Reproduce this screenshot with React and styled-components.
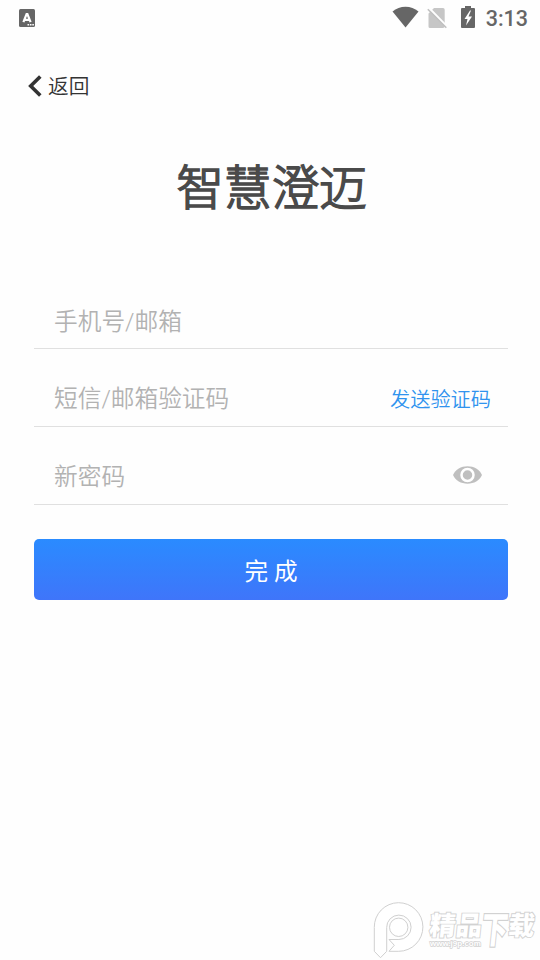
import React from 'react';
import styled, { createGlobalStyle } from 'styled-components';

const GlobalStyle = createGlobalStyle`
  * {
    box-sizing: border-box;
  }

  body {
    margin: 0;
    background: #fefefe;
    font-family: Roboto, 'Noto Sans CJK SC', sans-serif;
    font-weight: 350;
  }
`;

const Screen = styled.div`
  position: relative;
  display: flex;
  flex-direction: column;
  width: 540px;
  height: 960px;
  overflow: hidden;
  background: #fefefe;
`;

const StatusBar = styled.div`
  display: flex;
  align-items: center;
  justify-content: space-between;
  height: 36px;
  padding: 0 12px 0 19px;
`;

const StatusIcons = styled.div`
  display: flex;
  align-items: center;
`;

const Clock = styled.span`
  margin-left: 10px;
  padding-top: 2px;
  font-size: 21.5px;
  font-weight: 500;
  line-height: 36px;
  color: #666;
`;

const BackButton = styled.button`
  display: flex;
  align-items: center;
  align-self: flex-start;
  gap: 6px;
  height: 30px;
  margin: 35px 0 0 28px;
  padding: 0;
  border: none;
  background: none;
  font-family: inherit;
  font-size: 20.7px;
  font-weight: 350;
  line-height: 30px;
  color: #333;
`;

const BackLabel = styled.span`
  padding-top: 1px;
`;

const Title = styled.h1`
  margin: 48px 0 0 3px;
  height: 72px;
  font-family: 'Noto Sans CJK SC', sans-serif;
  font-size: 47.5px;
  font-weight: 300;
  line-height: 72px;
  text-align: center;
  color: #4a4a4a;
  -webkit-text-stroke: 1.7px #4a4a4a;
  stroke-linejoin: round;
`;

const Form = styled.form`
  display: flex;
  flex-direction: column;
  margin: 50px 32px 0 34px;
`;

const Field = styled.div`
  display: flex;
  align-items: center;
  height: 78px;
  padding: ${({ $top }) => $top}px 17px 0 20px;
  border-bottom: 1px solid #e0e0e0;
`;

const Input = styled.input`
  flex: 1;
  min-width: 0;
  height: 40px;
  padding: 0;
  border: none;
  outline: none;
  background: transparent;
  font-family: inherit;
  font-size: 23.7px;
  font-weight: 350;

  &::placeholder {
    color: #b2b2b2;
    opacity: 1;
  }
`;

const SendCode = styled.button`
  margin-bottom: 1px;
  padding: 0;
  border: none;
  background: none;
  font-family: inherit;
  font-size: 20.2px;
  font-weight: 350;
  color: #3093ee;
`;

const EyeIcon = styled.svg`
  margin: 0 9px 4px 0;
`;

const SubmitButton = styled.button`
  height: 61px;
  margin-top: 34px;
  padding: 0;
  border: none;
  border-radius: 5px;
  background: linear-gradient(#2a8bff, #3f75fa);
  font-family: inherit;
  font-size: 23.6px;
  font-weight: 400;
  color: #fff;
`;

const Watermark = styled.div`
  position: absolute;
  right: 0;
  bottom: 0;
  display: flex;
  width: 167px;
  height: 58px;
`;

const WatermarkText = styled.div`
  display: flex;
  flex-direction: column;
  padding-top: 8px;
  margin-left: 5px;
  color: #fff;
  paint-order: stroke fill;
  -webkit-text-stroke: 1.8px #d2d2d2;
  stroke-linejoin: round;
  white-space: nowrap;
`;

const WatermarkName = styled.span`
  display: flex;
  font-family: 'Noto Sans CJK SC', sans-serif;
  font-size: 26.2px;
  font-weight: 900;
  line-height: 28px;
  transform: skewX(-6deg);
`;

const TallGlyph = styled.span`
  transform: scaleY(1.4);
  transform-origin: 0 4px;
`;

const WatermarkUrl = styled.span`
  font-family: 'Liberation Sans', sans-serif;
  font-size: 8px;
  font-weight: 700;
  line-height: 12px;
  -webkit-text-stroke-width: 1.4px;
`;

const App = () => (
  <>
    <GlobalStyle />
    <Screen>
      <StatusBar>
        <svg width="16" height="18" viewBox="0 0 16 18">
          <rect width="16" height="18" rx="1.5" fill="#666" />
          <path d="M4.4 13.2 7.6 5h.8l3.2 8.2M5.6 10.8h4.8" fill="none" stroke="#fff" strokeWidth="2.2" />
          <path d="M8.5 15.8H15" stroke="#fff" strokeWidth="1.5" strokeDasharray="1.6 .8" />
        </svg>
        <StatusIcons>
          <svg width="92" height="36" viewBox="0 0 92 36">
            {/* wifi */}
            <path d="M8.5 11.5a20 20 0 0 1 26 0L21.5 27.5z" fill="#666" />
            {/* sim */}
            <path d="M50 8h9a1.7 1.7 0 0 1 1.7 1.7v16.6A1.7 1.7 0 0 1 59 28H46a1.5 1.5 0 0 1-1.5-1.5v-13z" fill="#c6c6c6" />
            <path d="m45 8 18.500 19" stroke="#fefefe" strokeWidth="2.200" />
            <path d="m43.800 9.300 18.500 18.500" stroke="#c0c0c0" strokeWidth="1.600" />
            {/* battery */}
            <path d="M81 8V6h6v2h3q1 0 1 1v18q0 1-1 1H78q-1 0-1-1V9q0-1 1-1z" fill="#666" />
            <path d="m86 10.500-5.500 8.500h3l-1.500 6.500 6-9h-3.500l2.500-6z" fill="#fff" />
          </svg>
          <Clock>3:13</Clock>
        </StatusIcons>
      </StatusBar>
      <BackButton type="button">
        <svg width="14" height="22" viewBox="0 0 14 22">
          <path d="M12.300 1.500 2.700 11l9.600 9.500" fill="none" stroke="#333" strokeWidth="3.600" />
        </svg>
        <BackLabel>返回</BackLabel>
      </BackButton>
      <Title>智慧澄迈</Title>
      <Form>
        <Field $top={24}>
          <Input placeholder="手机号/邮箱" />
        </Field>
        <Field $top={22}>
          <Input placeholder="短信/邮箱验证码" />
          <SendCode type="button">发送验证码</SendCode>
        </Field>
        <Field $top={22}>
          <Input type="password" placeholder="新密码" />
          <EyeIcon width="29" height="18" viewBox="0 0 29 18">
            <path d="M0 9C2.500 3.500 8 .3 14.500.3S26.500 3.500 29 9c-2.500 5.500-8 8.700-14.500 8.700S2.500 14.500 0 9z" fill="#bfbfbf" />
            <circle cx="14.500" cy="9" r="6" fill="#bfbfbf" stroke="#fff" strokeWidth="2.500" />
          </EyeIcon>
        </Field>
        <SubmitButton type="button">完 成</SubmitButton>
      </Form>
      <Watermark>
        <svg width="52" height="58" viewBox="0 0 52 58">
          <g fill="#fff" stroke="#d0d0d0">
            <path d="M1.300 25.500v23.800l6.200 6.400 6.200-6.400V25.500a12.200 12.200 0 1 1 12.200 12H16l5.300 5.800-5.300 6h9.700a24.300 24.300 0 1 0-24.400-24z" />
            <circle cx="25.700" cy="25.300" r="9.200" />
          </g>
        </svg>
        <WatermarkText>
          <WatermarkName>
            精品<TallGlyph>下</TallGlyph>载
          </WatermarkName>
          <WatermarkUrl>www.j9p.com</WatermarkUrl>
        </WatermarkText>
      </Watermark>
    </Screen>
  </>
);

export default App;
